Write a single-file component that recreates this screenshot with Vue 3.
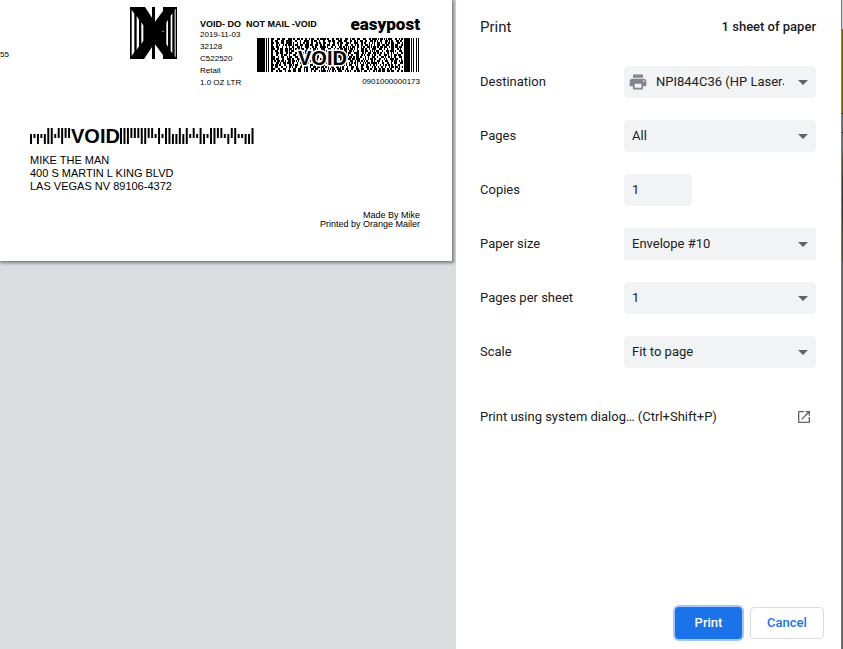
<script setup>
import { ref } from 'vue'

const destination = ref('NPI844C36 (HP LaserJet MFP)')
const pages = ref('All')
const copies = ref('1')
const paperSize = ref('Envelope #10')
const perSheet = ref('1')
const scale = ref('Fit to page')

// Postal bars: F full, A ascender, D descender, T tracker, space for the gap behind the overprint
const states = 'DTDTDFFTAFAA' + ' '.repeat(14) + 'FFFAAAFFAATFTFFDDFDFTATFDTFFAATDAFTTDDF'
const extents = { F: [0, 16], A: [0, 10], D: [6, 10], T: [6, 4] }
const postalBars = [...states]
  .map((s, i) => ({ s, x: i * 7 }))
  .filter((b) => b.s !== ' ')
  .map((b) => ({ x: b.x, y: extents[b.s][0], h: extents[b.s][1] }))

// Stacked barcode: 17 rows of code words, every word starts with a bar on a 17-module pitch
const cells = []
let seed = 90173
function next(n) {
  seed = (seed + 0x6d2b79f5) | 0
  let t = Math.imul(seed ^ (seed >>> 15), seed | 1)
  t ^= t + Math.imul(t ^ (t >>> 7), t | 61)
  return ((t ^ (t >>> 14)) >>> 0) % n
}
for (let row = 0; row < 17; row++) {
  for (let word = 15; word < 147; word += 17) {
    const end = Math.min(word + 17, 146)
    let x = word
    while (x < end) {
      const w = Math.min(1 + next(3), end - x)
      cells.push({ x, y: row * 2, w })
      x += w + 1 + next(3)
    }
  }
}
const guards = [[0, 8], [9, 1], [11, 1], [14, 1], [147, 6], [154, 1], [156, 1], [159, 1], [161, 1]]
</script>

<template>
  <main class="dialog">
    <section class="preview" aria-label="Preview">
      <article class="paper">
        <div class="postage">
          <span class="sender">55</span>
          <svg class="indicia" viewBox="0 0 141 156" aria-hidden="true">
            <rect width="141" height="156" fill="#000" />
            <g fill="#fff">
              <path d="M5 8l8 12v115l-8 12zM20 27l7 11v80l-7 11zM34 46l6 9v46l-6 9z" />
              <path d="M45 0h21v32zM75 0h24v12L75 44z" />
              <path d="M66 120v36H42zM75 112l24 32v12H75z" />
              <path d="M109 47l5-8v80l-5-8zM122 26l5-7v120l-5-7zM134 9l3-4v146l-3-4z" />
              <circle cx="99" cy="73" r="2" />
            </g>
          </svg>
          <div class="details">
            <div class="details-head">
              <strong>VOID- DO&nbsp; NOT MAIL -VOID</strong>
              <span class="brand">easypost</span>
            </div>
            <div class="details-body">
              <div class="lines">
                <div>2019-11-03</div>
                <div>32128</div>
                <div>C522520</div>
                <div>Retail</div>
                <div>1.0 OZ LTR</div>
              </div>
              <div class="code">
                <svg viewBox="0 0 162 34" shape-rendering="crispEdges" role="img" aria-label="Barcode">
                  <rect v-for="g in guards" :key="g[0]" :x="g[0]" y="0" :width="g[1]" height="34" />
                  <rect v-for="(c, i) in cells" :key="'c' + i" :x="c.x" :y="c.y" :width="c.w" height="2" />
                  <text class="overprint" x="41" y="27">VOID</text>
                </svg>
                <div>0901000000173</div>
              </div>
            </div>
          </div>
        </div>

        <div class="recipient">
          <svg class="postal" viewBox="0 0 224 16" role="img" aria-label="Postal barcode">
            <g transform="scale(.4945 1)">
              <rect v-for="b in postalBars" :key="b.x" :x="b.x" :y="b.y" width="4" :height="b.h" />
            </g>
            <text class="postal-void" x="41" y="15">VOID</text>
          </svg>
          <div>MIKE THE MAN</div>
          <div>400 S MARTIN L KING BLVD</div>
          <div>LAS VEGAS NV 89106-4372</div>
        </div>

        <div class="credit">
          <div>Made By Mike</div>
          <div>Printed by Orange Mailer</div>
        </div>
      </article>
    </section>

    <form class="sidebar" @submit.prevent>
      <header>
        <h1>Print</h1>
        <span class="sheets">1 sheet of paper</span>
      </header>

      <div class="settings">
        <div class="row">
          <label for="destination">Destination</label>
          <div class="select with-icon">
            <svg class="printer" viewBox="0 0 24 24" aria-hidden="true">
              <path fill="#80868b" d="M19 8H5c-1.660 0-3 1.340-3 3v6h4v4h12v-4h4v-6c0-1.660-1.340-3-3-3zm-3 11H8v-5h8v5zm3-7c-.55 0-1-.45-1-1s.45-1 1-1 1 .45 1 1-.45 1-1 1zm-1-9H6v4h12V3z" />
            </svg>
            <select id="destination" v-model="destination"><option>NPI844C36 (HP LaserJet MFP)</option></select>
          </div>
        </div>
        <div class="row">
          <label for="pages">Pages</label>
          <div class="select"><select id="pages" v-model="pages"><option>All</option></select></div>
        </div>
        <div class="row">
          <label for="copies">Copies</label>
          <div><input id="copies" v-model="copies" type="text" inputmode="numeric" /></div>
        </div>
        <div class="row">
          <label for="paper-size">Paper size</label>
          <div class="select"><select id="paper-size" v-model="paperSize"><option>Envelope #10</option></select></div>
        </div>
        <div class="row">
          <label for="per-sheet">Pages per sheet</label>
          <div class="select"><select id="per-sheet" v-model="perSheet"><option>1</option></select></div>
        </div>
        <div class="row">
          <label for="scale">Scale</label>
          <div class="select"><select id="scale" v-model="scale"><option>Fit to page</option></select></div>
        </div>
      </div>

      <button class="system" type="button">
        <span>Print using system dialog… (Ctrl+Shift+P)</span>
        <svg viewBox="0 0 24 24" aria-hidden="true">
          <path fill="#5f6368" d="M19 19H5V5h7V3H5c-1.110 0-2 .9-2 2v14c0 1.100.89 2 2 2h14c1.100 0 2-.9 2-2v-7h-2v7zM14 3v2h3.590l-9.830 9.830 1.410 1.410L19 6.410V10h2V3h-7z" />
        </svg>
      </button>

      <footer>
        <button class="primary" type="submit">Print</button>
        <button class="cancel" type="button">Cancel</button>
      </footer>
    </form>
    <div class="backdrop"></div>
  </main>
</template>

<style>
body {
  background: #fff;
}
</style>

<style scoped>
* {
  box-sizing: border-box;
}
.dialog {
  display: grid;
  grid-template-columns: minmax(0, 456fr) minmax(0, 385fr) 2px;
  min-height: 100vh;
  font-family: Roboto, sans-serif;
  font-size: 13px;
  color: #202124;
}
.preview {
  background: #dadce0;
  padding-right: 4px;
  overflow: hidden;
}
.paper {
  background: #fff;
  padding: 7px 32px 32px 0;
  color: #000;
  font-family: "Liberation Sans", sans-serif;
  box-shadow: 1px 1px 3px 1px #777a80;
}
.postage {
  display: flex;
  font-size: 8px;
  line-height: 12px;
}
.sender {
  width: 130px;
  padding-top: 42px;
}
.indicia {
  width: 47px;
  height: 52px;
  margin-right: 23px;
}
.details {
  flex: 1;
}
.details-head,
.details-body {
  display: flex;
  justify-content: space-between;
}
.details-head {
  height: 22px;
  align-items: flex-end;
}
.details-head strong {
  font-size: 9px;
  line-height: 10px;
  white-space: nowrap;
}
.brand {
  font-family: Roboto, sans-serif;
  font-size: 17px;
  font-weight: 900;
  line-height: 10px;
}
.lines {
  white-space: nowrap;
}
.code {
  padding-top: 9px;
  text-align: right;
}
.code svg {
  display: block;
  width: 162px;
  height: 34px;
  margin: 0 1px 4px 0;
}
.overprint {
  font-size: 20px;
  font-weight: 700;
  paint-order: stroke;
  stroke: #fff;
  stroke-width: 3px;
}
.recipient {
  padding: 39px 0 0 30px;
  font-size: 11px;
  line-height: 13px;
}
.postal {
  display: block;
  width: 224px;
  height: 16px;
  margin-bottom: 10px;
  overflow: visible;
}
.postal-void {
  font-size: 20px;
  font-weight: 700;
}
.credit {
  padding-top: 18px;
  text-align: right;
  font-size: 9px;
  line-height: 9px;
}
.sidebar {
  display: flex;
  flex-direction: column;
  background: #fff;
}
header {
  display: flex;
  justify-content: space-between;
  align-items: center;
  padding: 16px 25px 0 24px;
  line-height: 22px;
}
h1 {
  margin: 0;
  font-size: 15px;
  font-weight: 400;
}
.sheets {
  font-weight: 500;
}
.settings {
  display: grid;
  gap: 22px;
  padding: 28px 25px 0 24px;
}
.row {
  display: grid;
  grid-template-columns: minmax(0, 3fr) minmax(0, 4fr);
  align-items: center;
}
label {
  padding-bottom: 2px;
}
.select {
  position: relative;
}
.select::after {
  content: "";
  position: absolute;
  right: 8px;
  top: 14px;
  border: 5px solid transparent;
  border-top-color: #5f6368;
  border-bottom: 0;
  pointer-events: none;
}
select,
input {
  display: block;
  height: 32px;
  margin: 0;
  border: 0;
  border-radius: 4px;
  background: #f1f3f4;
  color: inherit;
  font: inherit;
  padding: 0 8px 2px;
}
select {
  width: 100%;
  padding-right: 32px;
  appearance: none;
}
.with-icon select {
  padding-left: 32px;
}
input {
  width: 68px;
}
.printer {
  position: absolute;
  left: 4px;
  top: 6px;
  width: 20px;
  height: 20px;
}
.system {
  display: flex;
  justify-content: space-between;
  align-items: center;
  margin-top: 33px;
  padding: 0 29px 0 24px;
  height: 32px;
  border: 0;
  background: none;
  color: inherit;
  font: inherit;
}
.system span {
  padding-bottom: 2px;
}
.system svg {
  width: 16px;
  height: 16px;
}
footer {
  display: flex;
  justify-content: flex-end;
  gap: 8px;
  margin-top: auto;
  padding: 24px 17px 10px;
}
footer button {
  height: 32px;
  border-radius: 4px;
  font: inherit;
  font-weight: 500;
  padding: 0 16px 2px;
}
.primary {
  min-width: 67px;
  border: 0;
  background: #1a73e8;
  color: #fff;
  box-shadow: 0 0 0 2px #a3c7f6;
}
.cancel {
  min-width: 74px;
  border: 1px solid #dadce0;
  background: #fff;
  color: #1a73e8;
}
.backdrop {
  border-left: 1px solid #777;
  background: linear-gradient(
    #d0d0d0 29px, #7f6000 29px, #7f6000 113px, #111 113px, #111 114px,
    #666a6b 114px, #666a6b 132px, #111 132px, #111 133px, #666a6b 133px,
    #666a6b 150px, #4e4d35 160px, #35373b 200px, #4c5035 240px, #4c5035 262px, #616263 262px
  );
}
</style>
